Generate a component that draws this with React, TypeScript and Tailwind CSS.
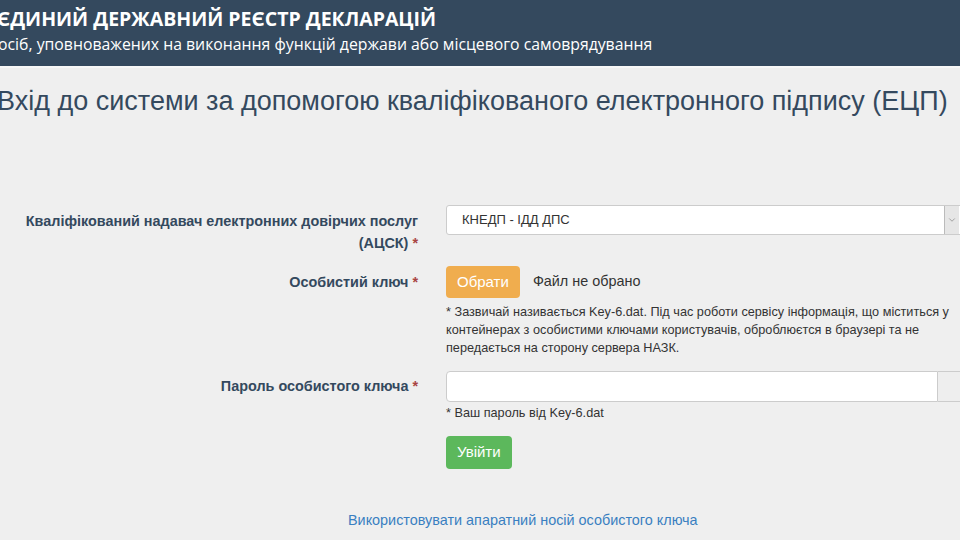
import { ChevronDown } from 'lucide-react'

export default function App() {
  return (
    <div className="w-[960px] h-[540px] overflow-hidden bg-[#efefef] font-['Liberation_Sans',Arial,sans-serif] text-[#333]">
      {/* Шапка */}
      <header className="h-[68px] bg-[#34495e] border-b-2 border-[#f7f7f7] text-white font-['Open_Sans',sans-serif] -ml-[3px] pt-[4px] whitespace-nowrap">
        <h1 className="text-[19.5px] font-bold leading-[30px]">ЄДИНИЙ ДЕРЖАВНИЙ РЕЄСТР ДЕКЛАРАЦІЙ</h1>
        <p className="text-[15.8px] leading-[20px] ml-[1px]">осіб, уповноважених на виконання функцій держави або місцевого самоврядування</p>
      </header>

      <h2 className="-ml-[3px] mt-[16px] text-[27px] leading-[34px] text-[#34495e] whitespace-nowrap">
        Вхід до системи за допомогою кваліфікованого електронного підпису (ЕЦП)
      </h2>

      <div className="mt-[87px] flex flex-col">
        {/* АЦСК */}
        <div className="flex h-[30px]">
          <label className="w-[418px] shrink-0 pl-[10px] pt-[5px] text-right text-[14.4px] font-bold leading-[22px] text-[#34495e]">
            Кваліфікований надавач електронних довірчих послуг (АЦСК) <span className="text-[#a94442]">*</span>
          </label>
          <div className="ml-[28px] shrink-0">
            <div className="flex h-[30px] w-[520px] border border-[#ccc] rounded-[3px] bg-white">
              <span className="flex-1 pl-[15px] text-[13px] leading-[28px] text-[#333]">КНЕДП - ІДД ДПС</span>
              <span className="w-[15px] flex items-center justify-center bg-[#e6e6e6] border-l border-[#bbb]">
                <ChevronDown className="w-[10px] h-[10px] text-[#777]" strokeWidth={1.5} />
              </span>
              <span className="w-[6px]" />
            </div>
          </div>
        </div>

        {/* Особистий ключ */}
        <div className="flex mt-[31px]">
          <label className="w-[418px] shrink-0 pt-[5px] text-right text-[14.4px] font-bold leading-[22px] text-[#34495e]">
            Особистий ключ <span className="text-[#a94442]">*</span>
          </label>
          <div className="ml-[28px] w-[510px] shrink-0">
            <div className="flex items-center gap-[13px]">
              <button className="h-[32px] px-[11px] rounded-[4px] bg-[#f0ad4e] text-white text-[15px]">Обрати</button>
              <span className="text-[14.4px] text-[#333]">Файл не обрано</span>
            </div>
            <p className="mt-[5px] text-[12.7px] leading-[18px] text-[#333]">
              * Зазвичай називається Key-6.dat. Під час роботи сервісу інформація, що міститься у контейнерах з особистими ключами користувачів, оброблюєтся в браузері та не передається на сторону сервера НАЗК.
            </p>
          </div>
        </div>

        {/* Пароль */}
        <div className="flex mt-[14px]">
          <label className="w-[418px] shrink-0 pt-[4px] text-right text-[14.4px] font-bold leading-[22px] text-[#34495e]">
            Пароль особистого ключа <span className="text-[#a94442]">*</span>
          </label>
          <div className="ml-[28px] shrink-0">
            <div className="flex h-[31px] w-[520px]">
              <input className="flex-1 border border-[#ccc] rounded-l-[4px] bg-white outline-none" type="password" />
              <span className="w-[28px] bg-[#eee] border border-l-0 border-[#ccc] rounded-r-[4px]" />
            </div>
            <p className="mt-[2px] text-[12.7px] leading-[18px] text-[#333]">* Ваш пароль від Key-6.dat</p>
            <button className="mt-[14px] h-[33px] px-[11px] rounded-[4px] bg-[#5cb85c] text-white text-[15px]">Увійти</button>
          </div>
        </div>
      </div>

      <div className="mt-[39px] pl-[348px]">
        <a className="text-[14.4px] text-[#3a7fc1] leading-[20px]">Використовувати апаратний носій особистого ключа</a>
      </div>
    </div>
  )
}
